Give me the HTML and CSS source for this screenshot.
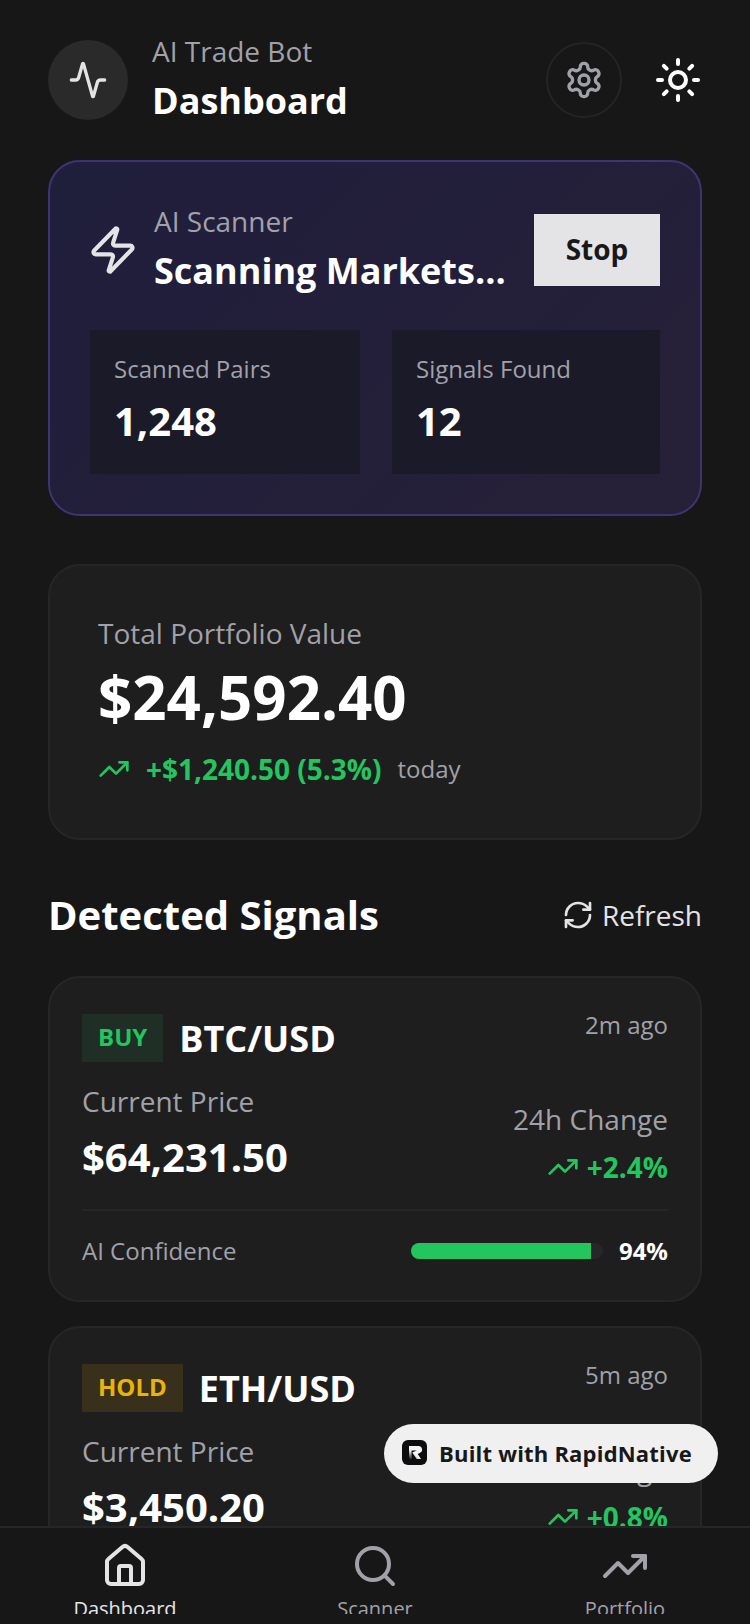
FILE: index.html
```html
<!DOCTYPE html>
<html lang="en">
<head>
    <meta charset="UTF-8">
    <meta name="viewport" content="width=device-width, initial-scale=1.0">
    <title>AI Trade Bot</title>
    <link rel="stylesheet" href="styles.css">
</head>
<body>
    <div class="app">
        <main class="content">
            <header class="top-bar">
                <div class="avatar">
                    <svg class="icon icon-40" viewBox="0 0 24 24"><path d="M22 12h-2.48a2 2 0 0 0-1.93 1.46l-2.35 8.36a.25.25 0 0 1-.48 0L9.24 2.18a.25.25 0 0 0-.48 0l-2.35 8.36A2 2 0 0 1 4.49 12H2"/></svg>
                </div>
                <div class="top-title">
                    <div class="top-sub">AI Trade Bot</div>
                    <div class="top-name">Dashboard</div>
                </div>
                <div class="settings-btn">
                    <svg class="icon icon-40" viewBox="0 0 24 24"><path d="M12.22 2h-.44a2 2 0 0 0-2 2v.18a2 2 0 0 1-1 1.73l-.43.25a2 2 0 0 1-2 0l-.15-.08a2 2 0 0 0-2.73.73l-.22.38a2 2 0 0 0 .73 2.73l.15.1a2 2 0 0 1 1 1.72v.51a2 2 0 0 1-1 1.74l-.15.09a2 2 0 0 0-.73 2.73l.22.38a2 2 0 0 0 2.73.73l.15-.08a2 2 0 0 1 2 0l.43.25a2 2 0 0 1 1 1.73V20a2 2 0 0 0 2 2h.44a2 2 0 0 0 2-2v-.18a2 2 0 0 1 1-1.73l.43-.25a2 2 0 0 1 2 0l.15.08a2 2 0 0 0 2.73-.73l.22-.39a2 2 0 0 0-.73-2.73l-.15-.08a2 2 0 0 1-1-1.74v-.5a2 2 0 0 1 1-1.74l.15-.09a2 2 0 0 0 .73-2.73l-.22-.38a2 2 0 0 0-2.73-.73l-.15.08a2 2 0 0 1-2 0l-.43-.25a2 2 0 0 1-1-1.73V4a2 2 0 0 0-2-2z"/><circle cx="12" cy="12" r="3"/></svg>
                </div>
                <svg class="icon icon-48 sun" viewBox="0 0 24 24"><circle cx="12" cy="12" r="4"/><path d="M12 2v2"/><path d="M12 20v2"/><path d="m4.93 4.93 1.41 1.41"/><path d="m17.66 17.66 1.41 1.41"/><path d="M2 12h2"/><path d="M20 12h2"/><path d="m6.34 17.66-1.41 1.41"/><path d="m19.07 4.93-1.41 1.41"/></svg>
            </header>

            <section class="scanner-card">
                <div class="scanner-head">
                    <svg class="icon zap" viewBox="0 0 24 24"><path d="M4 14a1 1 0 0 1-.78-1.63l9.9-10.2a.5.5 0 0 1 .86.46l-1.92 6.02A1 1 0 0 0 13 10h7a1 1 0 0 1 .78 1.63l-9.9 10.2a.5.5 0 0 1-.86-.46l1.92-6.02A1 1 0 0 0 11 14z"/></svg>
                    <div class="scanner-title">
                        <div class="top-sub">AI Scanner</div>
                        <div class="top-name">Scanning Markets...</div>
                    </div>
                    <button class="stop-btn">Stop</button>
                </div>
                <div class="stats">
                    <div class="stat-box">
                        <div class="stat-label">Scanned Pairs</div>
                        <div class="stat-value">1,248</div>
                    </div>
                    <div class="stat-box">
                        <div class="stat-label">Signals Found</div>
                        <div class="stat-value">12</div>
                    </div>
                </div>
            </section>

            <section class="portfolio-card">
                <div class="portfolio-label">Total Portfolio Value</div>
                <div class="portfolio-value">$24,592.40</div>
                <div class="portfolio-change">
                    <svg class="icon icon-32 green" viewBox="0 0 24 24"><polyline points="22 7 13.5 15.5 8.5 10.5 2 17"/><polyline points="16 7 22 7 22 13"/></svg>
                    <span class="change-amount">+$1,240.50 (5.3%)</span>
                    <span class="change-today">today</span>
                </div>
            </section>

            <div class="section-head">
                <h2>Detected Signals</h2>
                <div class="refresh">
                    <svg class="icon icon-32" viewBox="0 0 24 24"><path d="M3 12a9 9 0 0 1 9-9 9.75 9.75 0 0 1 6.74 2.74L21 8"/><path d="M21 3v5h-5"/><path d="M21 12a9 9 0 0 1-9 9 9.75 9.75 0 0 1-6.74-2.74L3 16"/><path d="M8 16H3v5"/></svg>
                    <span>Refresh</span>
                </div>
            </div>

            <article class="signal-card">
                <div class="signal-top">
                    <span class="badge badge-buy">BUY</span>
                    <span class="pair">BTC/USD</span>
                    <span class="time">2m ago</span>
                </div>
                <div class="signal-mid">
                    <div>
                        <div class="price-label">Current Price</div>
                        <div class="price-value">$64,231.50</div>
                    </div>
                    <div class="change-col">
                        <div class="price-label">24h Change</div>
                        <div class="change-value">
                            <svg class="icon icon-32 green" viewBox="0 0 24 24"><polyline points="22 7 13.5 15.5 8.5 10.5 2 17"/><polyline points="16 7 22 7 22 13"/></svg>
                            <span>+2.4%</span>
                        </div>
                    </div>
                </div>
                <div class="signal-foot">
                    <span class="conf-label">AI Confidence</span>
                    <div class="conf-right">
                        <div class="bar"><div class="bar-fill" style="width: 94%"></div></div>
                        <span class="conf-value">94%</span>
                    </div>
                </div>
            </article>

            <article class="signal-card">
                <div class="signal-top">
                    <span class="badge badge-hold">HOLD</span>
                    <span class="pair">ETH/USD</span>
                    <span class="time">5m ago</span>
                </div>
                <div class="signal-mid">
                    <div>
                        <div class="price-label">Current Price</div>
                        <div class="price-value">$3,450.20</div>
                    </div>
                    <div class="change-col">
                        <div class="price-label">24h Change</div>
                        <div class="change-value">
                            <svg class="icon icon-32 green" viewBox="0 0 24 24"><polyline points="22 7 13.5 15.5 8.5 10.5 2 17"/><polyline points="16 7 22 7 22 13"/></svg>
                            <span>+0.8%</span>
                        </div>
                    </div>
                </div>
            </article>
        </main>

        <nav class="bottom-nav">
            <div class="nav-item active">
                <svg class="icon icon-48" viewBox="0 0 24 24"><path d="M15 21v-8a1 1 0 0 0-1-1h-4a1 1 0 0 0-1 1v8"/><path d="M3 10a2 2 0 0 1 .709-1.528l7-5.999a2 2 0 0 1 2.582 0l7 5.999A2 2 0 0 1 21 10v9a2 2 0 0 1-2 2H5a2 2 0 0 1-2-2z"/></svg>
                <span class="nav-label">Dashboard</span>
            </div>
            <div class="nav-item">
                <svg class="icon icon-48" viewBox="0 0 24 24"><circle cx="11" cy="11" r="8"/><path d="m21 21-4.3-4.3"/></svg>
                <span class="nav-label">Scanner</span>
            </div>
            <div class="nav-item">
                <svg class="icon icon-48" viewBox="0 0 24 24"><polyline points="22 7 13.5 15.5 8.5 10.5 2 17"/><polyline points="16 7 22 7 22 13"/></svg>
                <span class="nav-label">Portfolio</span>
            </div>
        </nav>

        <div class="built-pill">
            <svg class="pill-logo" viewBox="0 0 25 25">
                <defs>
                    <linearGradient id="logo-fade" x1="0" y1="1" x2="0.6" y2="0.3">
                        <stop offset="0" stop-color="#0d0d0f"/>
                        <stop offset="0.6" stop-color="#f4f4f5"/>
                    </linearGradient>
                </defs>
                <rect width="25" height="25" rx="6" fill="#0d0d0f"/>
                <path d="M7 6h9.5a3.6 3.6 0 0 1 1.6 6.8l-2.4 1.2 3.3 5h-4.4l-4.3-6.4 4.4-2.1H9.5v8.5H7z" fill="url(#logo-fade)"/>
            </svg>
            <span>Built with RapidNative</span>
        </div>
    </div>
</body>
</html>
```

FILE: styles.css
```css
* {
    box-sizing: border-box;
}

body {
    margin: 0;
    background-color: #171717;
    font-family: "Open Sans", "Liberation Sans", sans-serif;
    color: #fff;
}

.app {
    position: relative;
    width: 750px;
    height: 1624px;
    display: flex;
    flex-direction: column;
    overflow: hidden;
}

.content {
    flex: 1;
    min-height: 0;
    overflow: hidden;
    padding: 40px 48px 0;
}

.icon {
    display: block;
    flex-shrink: 0;
    fill: none;
    stroke: currentColor;
    stroke-width: 2;
    stroke-linecap: round;
    stroke-linejoin: round;
}

.icon-32 {
    width: 32px;
    height: 32px;
}

.icon-40 {
    width: 40px;
    height: 40px;
}

.icon-48 {
    width: 48px;
    height: 48px;
}

.green {
    color: #22c55e;
}

/* header */
.top-bar {
    display: flex;
    align-items: center;
    height: 80px;
}

.avatar {
    width: 80px;
    height: 80px;
    border-radius: 50%;
    background-color: #2a2a2a;
    color: #e4e4e7;
    display: flex;
    align-items: center;
    justify-content: center;
}

.top-title {
    flex: 1;
    margin-left: 24px;
}

.top-sub {
    margin-bottom: 4px;
    font-size: 28px;
    line-height: 38px;
    color: #a1a1aa;
}

.top-name {
    font-size: 36px;
    line-height: 54px;
    font-weight: 700;
}

.settings-btn {
    width: 76px;
    height: 76px;
    border-radius: 50%;
    border: 2px solid #242426;
    color: #a1a1aa;
    display: flex;
    align-items: center;
    justify-content: center;
    margin-right: 32px;
}

.sun {
    color: #fff;
}

/* scanner */
.scanner-card {
    margin-top: 40px;
    padding: 40px;
    border: 2px solid #3f3470;
    border-radius: 32px;
    background: linear-gradient(135deg, #1f1e3c, #272038);
}

.scanner-head {
    display: flex;
    align-items: center;
    height: 96px;
    margin-bottom: 32px;
}

.zap {
    width: 52px;
    height: 52px;
    margin-left: -3px;
    stroke-width: 1.9;
    color: #e4e4e7;
}

.scanner-title {
    flex: 1;
    margin-left: 15px;
}

.stop-btn {
    width: 126px;
    height: 72px;
    border: none;
    border-radius: 0;
    padding: 0 0 2px;
    background-color: #e4e4e7;
    color: #18181b;
    font-family: inherit;
    font-size: 28px;
    font-weight: 700;
}

.stats {
    display: grid;
    grid-template-columns: 270px 1fr;
    gap: 32px;
}

.stat-box {
    height: 144px;
    padding: 23px 24px;
    background-color: #1b1a29;
}

.stat-label {
    font-size: 24px;
    line-height: 32px;
    color: #a1a1aa;
}

.stat-value {
    margin-top: 8px;
    font-size: 40px;
    line-height: 56px;
    font-weight: 700;
}

/* portfolio */
.portfolio-card {
    margin-top: 48px;
    height: 276px;
    padding: 47px 48px;
    background-color: #1e1e1e;
    border: 2px solid #262626;
    border-radius: 32px;
}

.portfolio-label {
    font-size: 28px;
    line-height: 40px;
    color: #a1a1aa;
}

.portfolio-value {
    margin-top: 4px;
    font-size: 60px;
    line-height: 80px;
    font-weight: 700;
}

.portfolio-change {
    display: flex;
    align-items: center;
    margin-top: 14px;
}

.change-amount {
    margin-left: 16px;
    font-size: 28px;
    line-height: 36px;
    font-weight: 700;
    color: #22c55e;
}

.change-today {
    margin-left: 16px;
    font-size: 24px;
    line-height: 36px;
    color: #a1a1aa;
}

/* signals */
.section-head {
    display: flex;
    align-items: center;
    justify-content: space-between;
    margin-top: 47px;
    height: 56px;
}

.section-head h2 {
    margin: 0;
    font-size: 40px;
    line-height: 56px;
    font-weight: 700;
}

.refresh {
    display: flex;
    align-items: center;
    gap: 8px;
    font-size: 28px;
    color: #e4e4e7;
}

.signal-card {
    margin-top: 24px;
    padding: 32px 32px 33px;
    background-color: #1e1e1e;
    border: 2px solid #262626;
    border-radius: 32px;
}

.section-head + .signal-card {
    margin-top: 33px;
}

.signal-top {
    display: flex;
    align-items: center;
    height: 56px;
}

.badge {
    height: 48px;
    padding: 0 16px;
    font-size: 24px;
    line-height: 46px;
    font-weight: 700;
}

.badge-buy {
    color: #22c55e;
    background-color: #1f2f26;
}

.badge-hold {
    color: #eab308;
    background-color: #38301b;
}

.pair {
    flex: 1;
    margin-left: 16px;
    padding-top: 2px;
    font-size: 36px;
    line-height: 54px;
    font-weight: 700;
}

.time {
    align-self: flex-start;
    font-size: 24px;
    line-height: 30px;
    color: #a1a1aa;
}

.signal-mid {
    display: flex;
    align-items: flex-end;
    justify-content: space-between;
    margin-top: 15px;
    margin-bottom: 20px;
}

.price-label {
    font-size: 28px;
    line-height: 40px;
    color: #a1a1aa;
}

.price-value {
    margin-top: 4px;
    font-size: 40px;
    line-height: 64px;
    font-weight: 700;
}

.change-col {
    display: flex;
    flex-direction: column;
    align-items: flex-end;
    padding-bottom: 2px;
}

.change-value {
    display: flex;
    align-items: center;
    gap: 8px;
    margin-top: 8px;
    font-size: 28px;
    line-height: 40px;
    font-weight: 700;
    color: #22c55e;
}

.signal-foot {
    display: flex;
    align-items: center;
    justify-content: space-between;
    padding-top: 24px;
    border-top: 2px solid #262626;
}

.conf-label {
    font-size: 24px;
    line-height: 32px;
    color: #a1a1aa;
}

.conf-right {
    display: flex;
    align-items: center;
    gap: 16px;
}

.bar {
    width: 192px;
    height: 16px;
    border-radius: 8px;
    background-color: #27272a;
    overflow: hidden;
}

.bar-fill {
    height: 100%;
    background-color: #22c55e;
}

.conf-value {
    font-size: 24px;
    line-height: 32px;
    font-weight: 700;
}

/* bottom nav */
.bottom-nav {
    flex-shrink: 0;
    height: 98px;
    display: flex;
    padding-bottom: 10px;
    background-color: #171717;
    border-top: 2px solid #262626;
}

.nav-item {
    flex: 1;
    display: flex;
    flex-direction: column;
    align-items: center;
    padding-top: 14px;
    overflow: hidden;
    color: #a1a1aa;
}

.nav-item.active {
    color: #e4e4e7;
}

.nav-label {
    margin-top: 4px;
    font-size: 20px;
    line-height: 30px;
}

/* overlay pill */
.built-pill {
    position: absolute;
    right: 32px;
    bottom: 141px;
    width: 334px;
    height: 59px;
    display: flex;
    align-items: center;
    gap: 12px;
    padding: 0 0 2px 18px;
    border-radius: 30px;
    background-color: #f0f0f0;
    color: #18181b;
    font-size: 22px;
    font-weight: 700;
    letter-spacing: 0.2px;
    white-space: nowrap;
}

.pill-logo {
    width: 25px;
    height: 25px;
    flex-shrink: 0;
}
```
